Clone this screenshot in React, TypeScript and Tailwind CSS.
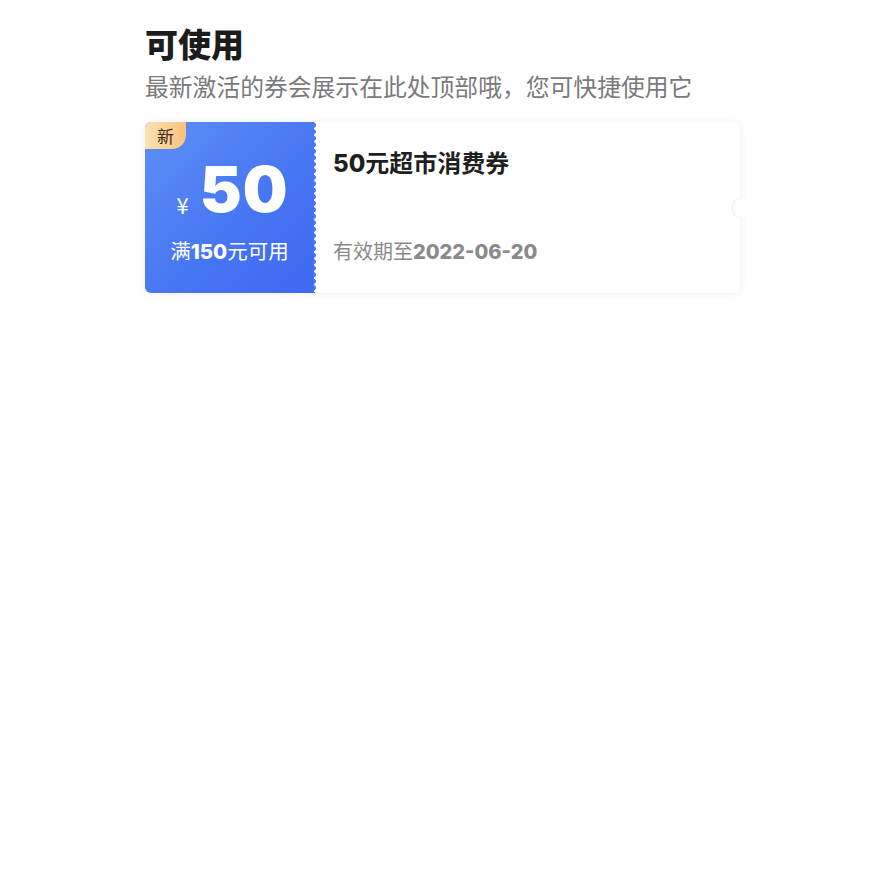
const cjk = "font-['Noto_Sans_CJK_SC','Noto_Sans',sans-serif]";
const num = "font-['Inter','Liberation_Sans',sans-serif]";

const Coupon = () => {
  return (
    <div className="relative flex h-[171px] w-[595px] rounded-[6px] bg-white shadow-[0_1px_8px_rgba(0,0,0,0.06)]">
      {/* left value block */}
      <div className="relative flex w-[169px] flex-col items-center rounded-l-[6px] bg-[linear-gradient(135deg,#5d8ff6_0%,#4675f3_60%,#3e68f1_100%)] text-white">
        <div className="absolute left-0 top-0 flex h-[27px] w-[41px] items-center justify-center rounded-tl-[6px] rounded-br-[14px] bg-[linear-gradient(90deg,#fde1b5,#f9c27c)] text-[17px] text-[#3a2a14]">
          新
        </div>
        <div className="ml-[6px] mt-[36px] flex items-end">
          <span className="mb-[6px] mr-[11px] text-[22px] leading-none">¥</span>
          <span className={`${num} text-[63px] font-black leading-none tracking-[1px]`}>50</span>
        </div>
        <div className="mt-[19px] flex items-baseline text-[20.5px] leading-none">
          <span>满</span>
          <span className={`${num} font-extrabold`}>150</span>
          <span>元可用</span>
        </div>
        <div className="absolute right-[-3px] top-0 h-full w-[4px] bg-[radial-gradient(circle_at_0_50%,#4a76f2_2.6px,transparent_3.2px)] bg-[length:4px_6.5px]" />
      </div>
      {/* right info */}
      <div className="flex flex-1 flex-col pl-[19px]">
        <div className="mt-[28px] flex items-baseline text-[24px] font-semibold leading-none text-[#1f1f1f]">
          <span className={`${num} font-extrabold`}>50</span>
          <span>元超市消费券</span>
        </div>
        <div className="mt-[65px] flex items-baseline text-[20px] leading-none text-[#8a8a8a]">
          <span>有效期至</span>
          <span className={`${num} font-extrabold`}>2022-06-20</span>
        </div>
      </div>
      <div className="absolute right-[-9px] top-[76px] h-[20px] w-[18px] rounded-full bg-white shadow-[inset_2px_0_3px_rgba(0,0,0,0.05)]" />
    </div>
  );
}

export default function App() {
  return (
    <div className={`${cjk} min-h-[887px] w-full bg-white pl-[145px] pt-[22px]`}>
      <h1 className="text-[33px] font-black leading-[42px] text-[#1c1c1c]">可使用</h1>
      <p className="mt-[6px] text-[23.8px] leading-[32px] text-[#7a7a7a]">
        最新激活的券会展示在此处顶部哦，您可快捷使用它
      </p>
      <div className="mt-[20px]">
        <Coupon />
      </div>
    </div>
  );
}
